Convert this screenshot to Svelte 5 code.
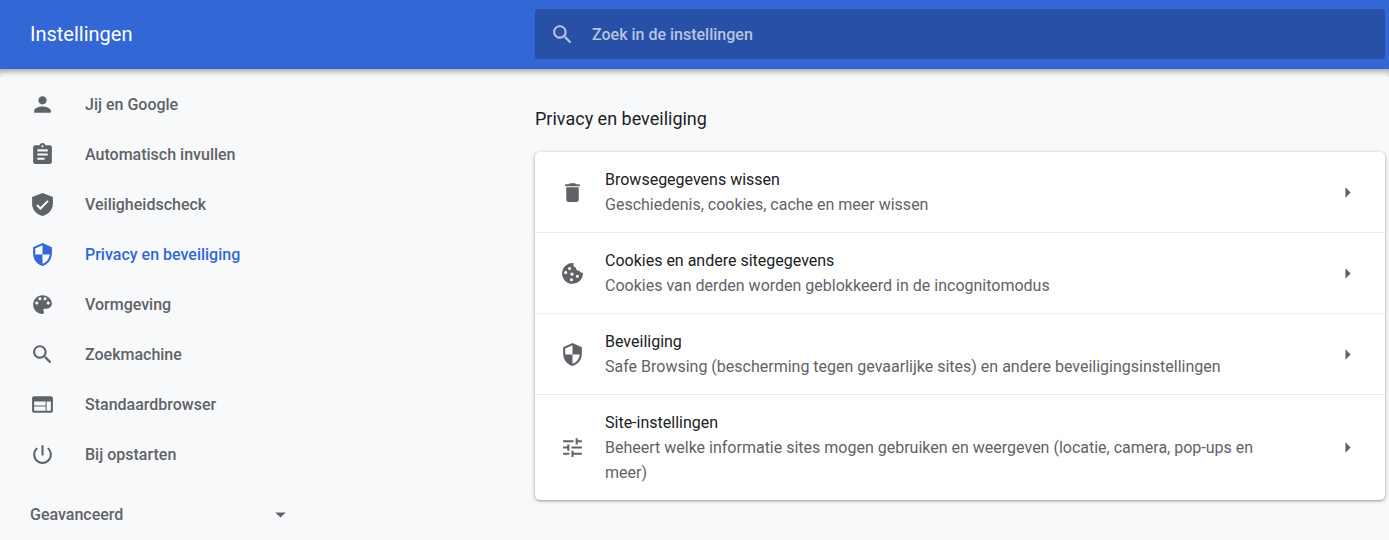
<script lang="ts">
  // 24x24 icon shapes, keyed by name. Shapes with holes rely on fill-rule: evenodd.
  const icons = {
    search: 'M15.5 14h-.79l-.28-.27C15.41 12.59 16 11.11 16 9.5 16 5.91 13.09 3 9.5 3S3 5.91 3 9.5 5.91 16 9.5 16c1.61 0 3.09-.59 4.23-1.57l.27.28v.79l5 4.99L20.49 19l-4.99-5zm-6 0C7.01 14 5 11.99 5 9.5S7.01 5 9.5 5 14 7.01 14 9.5 11.99 14 9.5 14z',
    person: 'M12 12c2.21 0 4-1.79 4-4s-1.79-4-4-4-4 1.79-4 4 1.79 4 4 4zm0 2c-2.67 0-8 1.34-8 4v2h16v-2c0-2.66-5.33-4-8-4z',
    assignment: 'M19 3h-4.18C14.4 1.84 13.3 1 12 1c-1.3 0-2.4.84-2.82 2H5c-1.1 0-2 .9-2 2v14c0 1.1.9 2 2 2h14c1.1 0 2-.9 2-2V5c0-1.1-.9-2-2-2zm-7 0c.55 0 1 .45 1 1s-.45 1-1 1-1-.45-1-1 .45-1 1-1zm2 14H7v-2h7v2zm3-4H7v-2h10v2zm0-4H7V7h10v2z',
    check: 'M12 1 2 4.7V11c0 5.7 4.1 10.6 10 12 5.9-1.4 10-6.3 10-12V4.7L12 1zM10 17.2l-4-4 1.4-1.4 2.6 2.6 6.6-6.6L18 9.2l-8 8z',
    shield: 'M12 1 3 5v6c0 5.55 3.84 10.74 9 12 5.16-1.26 9-6.45 9-12V5l-9-4zm0 10.99h7c-.53 4.12-3.28 7.79-7 8.94V12H5V6.3l7-3.11v8.8z',
    palette: 'M12 3c-4.97 0-9 4.03-9 9s4.03 9 9 9c.83 0 1.5-.67 1.5-1.5 0-.39-.15-.74-.39-1.01-.23-.26-.38-.61-.38-.99 0-.83.67-1.5 1.5-1.5H16c2.76 0 5-2.24 5-5 0-4.42-4.03-8-9-8zm-5.5 9c-.83 0-1.5-.67-1.5-1.5S5.67 9 6.5 9 8 9.67 8 10.5 7.33 12 6.5 12zm3-4C8.67 8 8 7.33 8 6.5S8.67 5 9.5 5s1.5.67 1.5 1.5S10.33 8 9.5 8zm5 0c-.83 0-1.5-.67-1.5-1.5S13.67 5 14.5 5s1.5.67 1.5 1.5S15.33 8 14.5 8zm3 4c-.83 0-1.5-.67-1.5-1.5S16.67 9 17.5 9s1.5.67 1.5 1.5-.67 1.5-1.5 1.5z',
    web: 'M20 4H4c-1.1 0-2 .9-2 2v12c0 1.1.9 2 2 2h16c1.1 0 2-.9 2-2V6c0-1.1-.9-2-2-2zm-5 14H4v-4h11v4zm0-5H4V9h11v4zm5 5h-4V9h4v9z',
    power: 'M13 3h-2v10h2V3zm4.83 2.17-1.42 1.42C17.99 7.86 19 9.81 19 12c0 3.87-3.13 7-7 7s-7-3.13-7-7c0-2.19 1.01-4.14 2.58-5.42L6.17 5.17C4.23 6.82 3 9.26 3 12c0 4.97 4.03 9 9 9s9-4.03 9-9c0-2.74-1.23-5.18-3.17-6.83z',
    trash: 'M6 19c0 1.1.9 2 2 2h8c1.1 0 2-.9 2-2V7H6v12zM19 4h-3.5l-1-1h-5l-1 1H5v2h14V4z',
    cookie: 'M22 11.2c-1.5.5-3.2-.4-3.4-2-1.900.4-3.500-1-3.200-2.700-1.900-.2-3-2.300-2.400-4.500A10 10 0 1 0 22 12zM7 11a1.500 1.500 0 1 0-3 0 1.500 1.500 0 0 0 3 0zm3.700-3.800a1.500 1.500 0 1 0-3 0 1.500 1.500 0 0 0 3 0zM13 12.600a1.500 1.500 0 1 0-3 0 1.500 1.500 0 0 0 3 0zm-.5 5.400a1.500 1.500 0 1 0-3 0 1.500 1.500 0 0 0 3 0zM18.200 14.600a1.500 1.500 0 1 0-3 0 1.500 1.500 0 0 0 3 0z',
    tune: 'M3 17v2h6v-2H3zM3 5v2h10V5H3zm10 16v-2h8v-2h-8v-2h-2v6h2zM7 9v2H3v2h4v2h2V9H7zm14 4v-2H11v2h10zm-6-4h2V7h4V5h-4V3h-2v6z',
    right: 'M10 7l5 5-5 5z',
    down: 'M7 10l5 5 5-5z',
  }

  type IconName = keyof typeof icons

  const menu: { id: string; icon: IconName; label: string }[] = [
    { id: 'people', icon: 'person', label: 'Jij en Google' },
    { id: 'autofill', icon: 'assignment', label: 'Automatisch invullen' },
    { id: 'safetyCheck', icon: 'check', label: 'Veiligheidscheck' },
    { id: 'privacy', icon: 'shield', label: 'Privacy en beveiliging' },
    { id: 'appearance', icon: 'palette', label: 'Vormgeving' },
    { id: 'search', icon: 'search', label: 'Zoekmachine' },
    { id: 'defaultBrowser', icon: 'web', label: 'Standaardbrowser' },
    { id: 'onStartup', icon: 'power', label: 'Bij opstarten' },
  ]

  const rows: { icon: IconName; title: string; sub: string }[] = [
    { icon: 'trash', title: 'Browsegegevens wissen', sub: 'Geschiedenis, cookies, cache en meer wissen' },
    { icon: 'cookie', title: 'Cookies en andere sitegegevens', sub: 'Cookies van derden worden geblokkeerd in de incognitomodus' },
    { icon: 'shield', title: 'Beveiliging', sub: 'Safe Browsing (bescherming tegen gevaarlijke sites) en andere beveiligingsinstellingen' },
    { icon: 'tune', title: 'Site-instellingen', sub: 'Beheert welke informatie sites mogen gebruiken en weergeven (locatie, camera, pop-ups en meer)' },
  ]

  let selected = $state('privacy')
  let query = $state('')
  let advanced = $state(false)
</script>

{#snippet icon(name: IconName)}
  <svg class="icon" viewBox="0 0 24 24" aria-hidden="true"><path d={icons[name]} /></svg>
{/snippet}

<div class="settings">
  <header class="toolbar">
    <h1>Instellingen</h1>
    <label class="search">
      {@render icon('search')}
      <input type="text" bind:value={query} placeholder="Zoek in de instellingen" aria-label="Zoek in de instellingen" />
    </label>
  </header>

  <div class="body">
    <nav class="menu">
      {#each menu as item (item.id)}
        <a href="#{item.id}" class:selected={selected === item.id} onclick={() => (selected = item.id)}>
          {@render icon(item.icon)}
          {item.label}
        </a>
      {/each}
      <button class="advanced" aria-expanded={advanced} onclick={() => (advanced = !advanced)}>
        Geavanceerd
        {@render icon('down')}
      </button>
    </nav>

    <main>
      <h2>Privacy en beveiliging</h2>
      <ul class="card">
        {#each rows as row (row.title)}
          <li>
            {@render icon(row.icon)}
            <div class="text">
              <div class="title">{row.title}</div>
              <div class="sub">{row.sub}</div>
            </div>
            <button class="open" aria-label={row.title}>{@render icon('right')}</button>
          </li>
        {/each}
      </ul>
    </main>
  </div>
</div>

<style>
  :global(body) {
    background: #f8f9fb;
  }

  .settings {
    --blue: #3367d6;
    --ink: #202124;
    --muted: #5f6368;
    --columns: 535px minmax(0, 1fr);
    font: 400 16px/25px Roboto, sans-serif;
    color: var(--muted);
  }

  .icon {
    display: block;
    flex: none;
    width: 25px;
    height: 25px;
    fill: currentColor;
    fill-rule: evenodd;
  }

  button {
    border: 0;
    padding: 0;
    background: none;
    color: inherit;
    font: inherit;
    cursor: pointer;
  }

  .toolbar {
    position: relative;
    display: grid;
    grid-template-columns: var(--columns);
    align-items: center;
    padding: 9px 4px 10px 0;
    background: var(--blue);
    color: #fff;
  }
  /* Drop shadow strip over the scrolling area below the toolbar */
  .toolbar::after {
    content: '';
    position: absolute;
    top: 100%;
    left: 0;
    right: 0;
    height: 8px;
    box-shadow: inset 0 5px 6px -3px rgba(0, 0, 0, 0.4);
    pointer-events: none;
  }
  h1 {
    margin: 0;
    padding-left: 30px;
    font-size: 20px;
    font-weight: 400;
  }
  .search {
    display: flex;
    align-items: center;
    gap: 17px;
    height: 50px;
    padding: 0 15px;
    box-sizing: border-box;
    border-radius: 2px;
    background: #2850a7;
    color: #b7c4e1;
  }
  .search input {
    flex: 1;
    min-width: 0;
    border: 0;
    padding: 0;
    outline: 0;
    background: none;
    color: #fff;
    font: inherit;
    font-weight: 500;
  }
  .search input::placeholder {
    color: #b7c4e1;
    opacity: 1;
  }

  .body {
    display: grid;
    grid-template-columns: var(--columns);
    padding-right: 4px;
  }

  .menu {
    display: flex;
    flex-direction: column;
    width: 293px;
    padding-top: 10px;
    font-weight: 500;
  }
  .menu a {
    display: flex;
    align-items: center;
    gap: 30px;
    height: 50px;
    padding-left: 30px;
    color: inherit;
    text-decoration: none;
  }
  .menu a.selected {
    color: var(--blue);
  }
  .advanced {
    display: flex;
    align-items: center;
    justify-content: space-between;
    height: 50px;
    margin-top: 10px;
    padding-left: 30px;
  }

  h2 {
    margin: 37px 0 21px;
    color: var(--ink);
    font-size: 18px;
    font-weight: 400;
  }
  .card {
    margin: 0;
    padding: 0;
    list-style: none;
    border-radius: 5px;
    background: #fff;
    box-shadow: 0 1px 2px rgba(60, 64, 67, 0.3), 0 1px 4px rgba(60, 64, 67, 0.3);
  }
  .card li {
    display: flex;
    align-items: center;
    padding: 15px 25px;
  }
  .card li + li {
    border-top: 1px solid #ebebeb;
  }
  .text {
    flex: 1;
    min-width: 0;
    padding: 0 40px 0 20px;
  }
  .title {
    color: var(--ink);
  }
</style>
